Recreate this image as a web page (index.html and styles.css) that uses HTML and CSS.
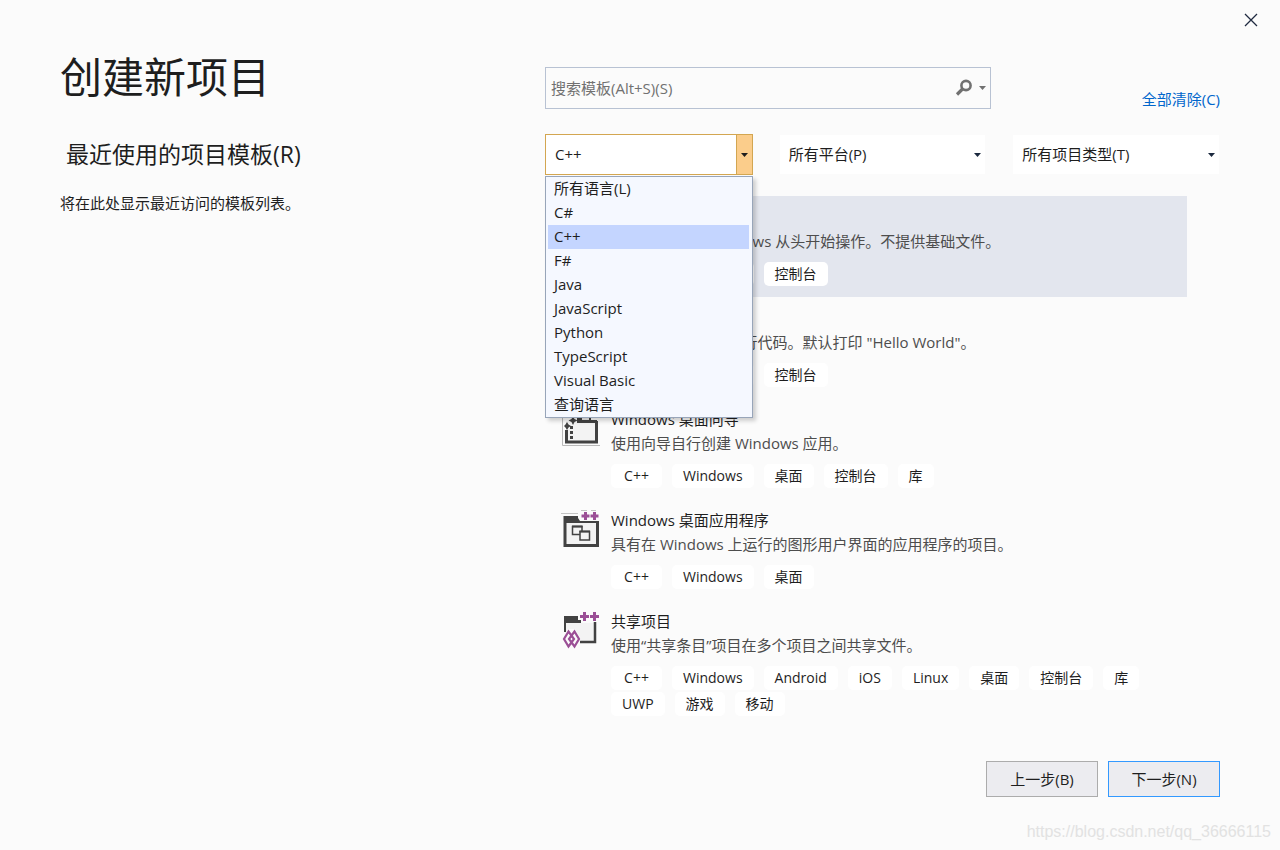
FILE: index.html
```html
<!DOCTYPE html>
<html lang="zh-CN">
<head>
<meta charset="utf-8">
<meta name="viewport" content="width=device-width, initial-scale=1">
<title>创建新项目</title>
<link rel="stylesheet" href="styles.css">
</head>
<body>
<header class="titlebar">
  <button class="close" type="button" aria-label="关闭">
    <svg width="14" height="14" viewBox="0 0 14 14"><path d="M1 1l12 12M13 1L1 13" fill="none" stroke="#1f2a40" stroke-width="1.3"/></svg>
  </button>
</header>
<main class="content">
  <section class="recent">
    <h1 class="title">创建新项目</h1>
    <h2 class="subtitle">最近使用的项目模板(R)</h2>
    <p class="note">将在此处显示最近访问的模板列表。</p>
  </section>
  <section class="templates">
    <div class="search-row">
      <div class="search">
        <input class="search-input" type="text" placeholder="搜索模板(Alt+S)(S)" aria-label="搜索模板">
        <button class="search-button" type="button" aria-label="搜索">
          <svg width="32" height="18" viewBox="0 0 32 18"><circle cx="11" cy="6.5" r="4.6" fill="none" stroke="#717171" stroke-width="2.6"/><path d="M8 9.500L2 15.500" stroke="#717171" stroke-width="3.200"/><path d="M24 7h7l-3.500 4z" fill="#717171"/></svg>
        </button>
      </div>
      <a class="clear" href="#">全部清除(C)</a>
    </div>
    <div class="filters">
      <div class="filter filter-open">
        <select class="filter-select" aria-label="语言"><option>C++</option></select>
        <span class="filter-arrow"><svg width="7" height="4" viewBox="0 0 7 4"><path d="M0 0h7L3.500 4z" fill="#1e1e1e"/></svg></span>
        <ul class="menu" role="listbox" aria-label="语言">
          <li class="option" role="option">所有语言(L)</li>
          <li class="option" role="option">C#</li>
          <li class="option option-active" role="option" aria-selected="true">C++</li>
          <li class="option" role="option">F#</li>
          <li class="option" role="option">Java</li>
          <li class="option" role="option">JavaScript</li>
          <li class="option" role="option">Python</li>
          <li class="option" role="option">TypeScript</li>
          <li class="option" role="option">Visual Basic</li>
          <li class="option" role="option">查询语言</li>
        </ul>
      </div>
      <div class="filter">
        <select class="filter-select" aria-label="平台"><option>所有平台(P)</option></select>
        <span class="filter-arrow"><svg width="7" height="4" viewBox="0 0 7 4"><path d="M0 0h7L3.500 4z" fill="#1b293e"/></svg></span>
      </div>
      <div class="filter">
        <select class="filter-select" aria-label="项目类型"><option>所有项目类型(T)</option></select>
        <span class="filter-arrow"><svg width="7" height="4" viewBox="0 0 7 4"><path d="M0 0h7L3.500 4z" fill="#1b293e"/></svg></span>
      </div>
    </div>
    <ul class="list">
      <li class="item item-selected">
        <svg class="icon" viewBox="0 0 40 40"><path d="M5 10h30v26H5z" fill="#f3f3f3" stroke="#424242" stroke-width="3"/></svg>
        <div class="item-body">
          <h3 class="item-title">空项目</h3>
          <p class="item-text">使用 <span class="lang">C++</span> for Windows 从头开始操作。不提供基础文件。</p>
          <div class="tags"><span class="tag tag-lang">C++</span><span class="tag">Windows</span><span class="tag">控制台</span></div>
        </div>
      </li>
      <li class="item">
        <svg class="icon" viewBox="0 0 40 40"><path d="M5 10h30v26H5z" fill="#f3f3f3" stroke="#424242" stroke-width="3"/></svg>
        <div class="item-body">
          <h3 class="item-title">控制台应用</h3>
          <p class="item-text">在 Windows 终端运行代码。默认打印 "Hello World"。</p>
          <div class="tags"><span class="tag tag-lang">C++</span><span class="tag">Windows</span><span class="tag">控制台</span></div>
        </div>
      </li>
      <li class="item">
        <svg class="icon" viewBox="0 0 40 40">
          <path d="M1.500 4v33.500H39" fill="none" stroke="#b9b9b9"/>
          <path d="M5 13h31v21H5z" fill="#f3f3f3"/>
          <path d="M16 7h14v5h6v3H16z" fill="#424242"/>
          <path d="M21 9h7v3h-7z" fill="#e9e9e9"/>
          <path d="M35.500 13v21H5.500V22" fill="none" stroke="#424242" stroke-width="3"/>
          <path d="M10.500 18v14" stroke="#424242" stroke-width="3" stroke-dasharray="3 2" fill="none"/>
          <path d="M6 14l1.500 2.500L10 18l-2.500 1.500L6 22l-1.500-2.500L3 18l1.500-1.500zM12 8l1.500 3 3 1.500-3 1.500-1.500 3-1.500-3-3-1.500 3-1.500z" fill="#424242"/>
        </svg>
        <div class="item-body">
          <h3 class="item-title">Windows 桌面向导</h3>
          <p class="item-text">使用向导自行创建 Windows 应用。</p>
          <div class="tags"><span class="tag tag-lang">C++</span><span class="tag">Windows</span><span class="tag">桌面</span><span class="tag">控制台</span><span class="tag">库</span></div>
        </div>
      </li>
      <li class="item">
        <svg class="icon" viewBox="0 0 40 40">
          <path d="M0 4.500h18M20 1.500h6M30 1.500h5" stroke="#c4c4c4" fill="none"/>
          <path d="M2.500 7H38v31H2.500z" fill="#424242"/>
          <path d="M5.500 14H35v21H5.500z" fill="#f3f3f3"/>
          <path d="M17 2h23v10H19l-2-3z" fill="#fbfbfb"/>
          <path d="M11.500 17.500h9.500v8h-9.500z" fill="#f3f3f3" stroke="#424242" stroke-width="1.500"/>
          <path d="M19 22.500h9.500v8.500H19z" fill="#f3f3f3" stroke="#424242" stroke-width="1.500"/>
          <path d="M11 17.500h10.500M18.500 22.500H29" stroke="#424242" stroke-width="2.200"/>
          <path d="M20.500 7h8M24.500 3v8M29.500 7h8M33.500 3v8" stroke="#9b4f96" stroke-width="3"/>
        </svg>
        <div class="item-body">
          <h3 class="item-title">Windows 桌面应用程序</h3>
          <p class="item-text">具有在 Windows 上运行的图形用户界面的应用程序的项目。</p>
          <div class="tags"><span class="tag tag-lang">C++</span><span class="tag">Windows</span><span class="tag">桌面</span></div>
        </div>
      </li>
      <li class="item">
        <svg class="icon" viewBox="0 0 40 40">
          <path d="M4 13h29v18H4z" fill="#f3f3f3"/>
          <path d="M3 6h14v4h3v3H5v9H3z" fill="#424242"/>
          <path d="M34 12v20H19" fill="none" stroke="#424242" stroke-width="2.500"/>
          <path d="M19 6.500h9M23.500 2v9M29 6.500h9M33.500 2v9" stroke="#9b4f96" stroke-width="3"/>
          <path d="M1 29l6-10h7l6 10-6 10H7z" fill="#fbfbfb"/>
          <path d="M7.500 21.500L3 29l4.500 7.500L13 29zM13.500 21.500L8 29l5.500 7.500L18 29z" fill="none" stroke="#9b4f96" stroke-width="2.200"/>
        </svg>
        <div class="item-body">
          <h3 class="item-title">共享项目</h3>
          <p class="item-text">使用“共享条目”项目在多个项目之间共享文件。</p>
          <div class="tags"><span class="tag tag-lang">C++</span><span class="tag">Windows</span><span class="tag">Android</span><span class="tag">iOS</span><span class="tag">Linux</span><span class="tag">桌面</span><span class="tag">控制台</span><span class="tag">库</span><span class="tag">UWP</span><span class="tag">游戏</span><span class="tag">移动</span></div>
        </div>
      </li>
    </ul>
  </section>
</main>
<footer class="footer">
  <button class="action" type="button">上一步(B)</button>
  <button class="action action-primary" type="button">下一步(N)</button>
</footer>
<div class="watermark">https://blog.csdn.net/qq_36666115</div>
</body>
</html>
```
FILE: styles.css
```css
* {
  box-sizing: border-box;
}

body {
  display: flex;
  flex-direction: column;
  min-height: 100vh;
  margin: 0;
  background: #fbfbfb;
  color: #1e1e1e;
  font: 15px/24px "Open Sans", "Noto Sans CJK SC", sans-serif;
}

h1, h2, h3, p, ul {
  margin: 0;
  padding: 0;
  font-weight: 400;
  list-style: none;
}

button, input, select {
  font: inherit;
  color: inherit;
}

svg {
  display: block;
}

.titlebar {
  display: flex;
  justify-content: flex-end;
  height: 40px;
  padding-right: 9px;
}

.close {
  display: grid;
  place-items: center;
  width: 40px;
  padding: 0;
  border: 0;
  background: none;
}

.content {
  display: grid;
  grid-template-columns: 485px minmax(0, 1fr);
  padding: 0 60px;
}

.recent {
  padding-top: 7px;
}

.title {
  font-size: 42px;
  line-height: 60px;
}

.subtitle {
  margin-top: 30px;
  padding-left: 6px;
  font-size: 23px;
  line-height: 34px;
}

.note {
  margin-top: 20px;
}

.templates {
  padding-top: 27px;
}

.search-row {
  display: flex;
  justify-content: space-between;
  align-items: flex-end;
}

.search {
  display: flex;
  width: 446px;
  height: 42px;
  border: 1px solid #b8c2d3;
}

.search-input {
  flex: 1;
  min-width: 0;
  padding: 0 5px;
  border: 0;
  background: none;
  outline: 0;
}

.search-input::placeholder {
  color: #717171;
  opacity: 1;
}

.search-button {
  display: grid;
  place-items: center;
  padding: 0 3px 0 0;
  border: 0;
  background: none;
}

.clear {
  color: #0066cc;
  line-height: 20px;
  text-decoration: none;
}

.filters {
  display: grid;
  grid-template-columns: repeat(3, minmax(0, 1fr));
  gap: 26px;
  margin-top: 25px;
}

.filter {
  position: relative;
  display: grid;
  grid-template-columns: minmax(0, 1fr) 16px;
  height: 41px;
  border: 1px solid transparent;
  background: #ffffff padding-box;
}

.filter-select {
  grid-area: 1 / 1 / 2 / 3;
  padding: 0 24px 2px 9px;
  border: 0;
  background: none;
  appearance: none;
  outline: 0;
}

.filter-arrow {
  display: grid;
  grid-area: 1 / 2;
  place-items: center;
  pointer-events: none;
}

.filter-open {
  border-color: #d3a651;
}

.filter-open .filter-arrow {
  border-left: 1px solid #d3a651;
  background: #fbcd8b;
}

.menu {
  position: absolute;
  z-index: 2;
  top: 41px;
  right: -1px;
  left: -1px;
  padding: 0 3px 0 2px;
  border: 1px solid #98a5b9;
  background: #f5f8ff;
  box-shadow: 3px 3px 4px rgba(0, 0, 0, 0.18);
}

.option {
  padding: 0 0 2px 6px;
  line-height: 22px;
}

.option-active {
  background: #c4d5ff;
}

.list {
  margin: 21px 33px 0 0;
}

.item {
  display: flex;
  gap: 10px;
  min-height: 101px;
  padding: 9px 0 8px 16px;
}

.item-selected {
  background: #e3e6ee;
}

.icon {
  flex: none;
  width: 40px;
  height: 40px;
  margin-top: 1px;
}

.item-title {
  font-size: 15px;
}

.item-text {
  color: #4d4d4d;
}

.lang {
  padding-right: 8px;
}

.tags {
  display: flex;
  flex-wrap: wrap;
  gap: 2px 10px;
  margin-top: 9px;
}

.tag {
  padding: 0 11px;
  border-radius: 5px;
  background: #ffffff;
  font-size: 14px;
}

.tag-lang {
  min-width: 51px;
  text-align: center;
}

.footer {
  display: flex;
  justify-content: flex-end;
  gap: 10px;
  margin-top: auto;
  padding: 20px 60px 53px;
}

.action {
  width: 112px;
  height: 36px;
  padding: 0;
  border: 1px solid #acacac;
  background: #ececf0;
}

.action-primary {
  border-color: #3399ff;
}

.watermark {
  position: absolute;
  right: 9px;
  bottom: 6px;
  color: #e2e2e2;
  font: 16px/24px "Liberation Sans", sans-serif;
}
```
